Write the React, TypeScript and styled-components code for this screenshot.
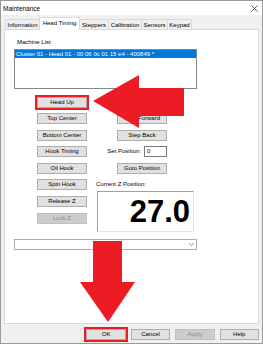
import styled, { createGlobalStyle } from 'styled-components';

const GlobalStyle = createGlobalStyle`
  html, body {
    margin: 0;
    padding: 0;
    background: #ffffff;
  }
  * {
    box-sizing: border-box;
  }
`;

const red = '#ec1c24';

const Window = styled.div`
  position: relative;
  width: 263px;
  height: 344px;
  border: 1px solid #9a9a9a;
  background: #f0f0f0;
  display: flex;
  flex-direction: column;
  font-family: "Liberation Sans", Arial, sans-serif;
  font-size: 6px;
  color: #000;
`;

const TitleBar = styled.div`
  height: 14px;
  background: #ffffff;
  display: flex;
  align-items: center;
  justify-content: space-between;
  padding: 0 4px 0 2px;
  font-size: 6.5px;
`;

const Body = styled.div`
  flex: 1;
  display: flex;
  flex-direction: column;
  padding: 2px 3px 0 3px;
`;

const TabStrip = styled.div`
  height: 12px;
  display: flex;
  align-items: flex-end;
  padding-left: 1px;
`;

const Tab = styled.div<{ $w: number; $active?: boolean }>`
  position: relative;
  width: ${p => p.$w}px;
  height: ${p => (p.$active ? 13 : 10)}px;
  margin-left: -1px;
  margin-bottom: ${p => (p.$active ? -1 : 0)}px;
  z-index: ${p => (p.$active ? 1 : 0)};
  background: ${p => (p.$active ? '#ffffff' : '#f0f0f0')};
  border: 1px solid #d9d9d9;
  border-bottom: none;
  display: flex;
  align-items: center;
  justify-content: center;
  padding-bottom: ${p => (p.$active ? 2 : 0)}px;
  white-space: nowrap;

  &:first-child {
    margin-left: 0;
  }
`;

const Panel = styled.div`
  height: 295px;
  background: #ffffff;
  border: 1px solid #d9d9d9;
  padding: 8px 0 0 9px;
  display: flex;
  flex-direction: column;
  align-items: flex-start;
`;

const Label = styled.div`
  line-height: 8px;
  white-space: nowrap;
`;

const ListLabel = styled(Label)`
  margin: 0 0 3px 3px;
`;

const ListBox = styled.div`
  width: 183px;
  height: 40px;
  background: #ffffff;
  border: 1px solid #828790;
`;

const ListItem = styled.div<{ $selected?: boolean }>`
  height: 8px;
  line-height: 8px;
  padding-left: 1px;
  white-space: nowrap;
  background: ${p => (p.$selected ? '#0078d7' : 'transparent')};
  color: ${p => (p.$selected ? '#ffffff' : '#000000')};
`;

const ButtonsArea = styled.div`
  display: flex;
  align-items: flex-start;
  margin-top: 7.5px;
`;

const ButtonColumn = styled.div`
  display: grid;
  grid-template-rows: repeat(8, 11px);
  row-gap: 5.6px;
  width: 50px;
  margin-left: 23px;
`;

const RightColumn = styled.div`
  width: 100px;
  margin-left: 9px;
  display: flex;
  flex-direction: column;
`;

const RightGrid = styled.div`
  display: grid;
  grid-template-rows: repeat(6, 11px);
  row-gap: 5.6px;
`;

const Button = styled.button<{ $highlight?: boolean; $w?: number }>`
  width: ${p => p.$w ?? 50}px;
  height: 11px;
  margin: 0;
  padding: 0;
  font-family: inherit;
  font-size: 6px;
  line-height: 9px;
  color: #000;
  background: #e1e1e1;
  border: 1px solid #adadad;
  border-radius: 0;
  outline: ${p => (p.$highlight ? `2px solid ${red}` : 'none')};
  white-space: nowrap;

  &:disabled {
    background: #cccccc;
    border-color: #bfbfbf;
    color: #8a8a8a;
  }
`;

const RightButton = styled(Button)`
  margin-left: 21px;
`;

const FieldRow = styled.div`
  display: flex;
  align-items: center;
  justify-content: flex-end;
  gap: 3px;
  padding-right: 29px;
`;

const Input = styled.div`
  width: 23px;
  height: 11px;
  border: 1px solid #7a7a7a;
  background: #fff;
  line-height: 9px;
  padding-left: 2px;
`;

const PositionLabel = styled(Label)`
  line-height: 11px;
`;

const Display = styled.div`
  margin: 1px 0 0 1px;
  width: 97px;
  height: 41px;
  background: #ffffff;
  border: 1px solid;
  border-color: #a0a0a0 #e3e3e3 #e3e3e3 #a0a0a0;
  display: flex;
  align-items: center;
  justify-content: flex-end;
  padding-right: 3px;
  font-size: 31px;
  font-weight: 700;
  line-height: 1;
`;

const Combo = styled.div`
  margin-top: 7px;
  width: 183px;
  height: 11px;
  background: #ffffff;
  border: 1px solid #adadad;
  display: flex;
  align-items: center;
  justify-content: flex-end;
  padding-right: 2px;
`;

const Footer = styled.div`
  display: flex;
  justify-content: flex-end;
  gap: 4.9px;
  margin-top: 4.5px;
`;

const Overlay = styled.svg`
  position: absolute;
  left: -1px;
  top: -1px;
  pointer-events: none;
`;

const tabs = [
  { label: 'Information', w: 35 },
  { label: 'Head Timing', w: 41, active: true },
  { label: 'Steppers', w: 30 },
  { label: 'Calibration', w: 34 },
  { label: 'Sensors', w: 27 },
  { label: 'Keypad', w: 25 },
];

const leftButtons = [
  { label: 'Head Up', highlight: true },
  { label: 'Top Center' },
  { label: 'Bottom Center' },
  { label: 'Hook Timing' },
  { label: 'Oil Hook' },
  { label: 'Spin Hook' },
  { label: 'Release Z' },
  { label: 'Lock Z', disabled: true },
];

const footerButtons = [
  { label: 'OK', highlight: true },
  { label: 'Cancel' },
  { label: 'Apply', disabled: true },
  { label: 'Help' },
];

export default function App() {
  return (
    <>
      <GlobalStyle />
      <Window>
        <TitleBar>
          <span>Maintenance</span>
          <svg width="7" height="7" viewBox="0 0 7 7">
            <path d="M0.5 0.5 L6.5 6.5 M6.5 0.5 L0.5 6.5" stroke="#333" strokeWidth="0.8" />
          </svg>
        </TitleBar>
        <Body>
          <TabStrip>
            {tabs.map(t => (
              <Tab key={t.label} $w={t.w} $active={t.active}>
                {t.label}
              </Tab>
            ))}
          </TabStrip>
          <Panel>
            <ListLabel>Machine List</ListLabel>
            <ListBox>
              <ListItem $selected>Cluster 01 - Head 01 - 00 06 0c 01 15 e4 - 400849 *</ListItem>
            </ListBox>
            <ButtonsArea>
              <ButtonColumn>
                {leftButtons.map(b => (
                  <Button key={b.label} $highlight={b.highlight} disabled={b.disabled}>
                    {b.label}
                  </Button>
                ))}
              </ButtonColumn>
              <RightColumn>
                <RightGrid>
                  <div />
                  <RightButton>Step Forward</RightButton>
                  <RightButton>Step Back</RightButton>
                  <FieldRow>
                    <PositionLabel>Set Position:</PositionLabel>
                    <Input>0</Input>
                  </FieldRow>
                  <RightButton>Goto Position</RightButton>
                  <PositionLabel>Current Z Position:</PositionLabel>
                </RightGrid>
                <Display>27.0</Display>
              </RightColumn>
            </ButtonsArea>
            <Combo>
              <svg width="5" height="3" viewBox="0 0 5 3">
                <polyline points="0.3,0.3 2.5,2.5 4.7,0.3" fill="none" stroke="#555" strokeWidth="0.7" />
              </svg>
            </Combo>
          </Panel>
          <Footer>
            {footerButtons.map(b => (
              <Button key={b.label} $w={39.5} $highlight={b.highlight} disabled={b.disabled}>
                {b.label}
              </Button>
            ))}
          </Footer>
        </Body>
        <Overlay width="263" height="345" viewBox="0 0 263 345">
          <polygon points="93,101 139,75 139,88 184,88 184,116 139,116 139,128" fill={red} />
          <polygon points="93,241 122,241 122,282 135,282 108,322 80,282 93,282" fill={red} />
        </Overlay>
      </Window>
    </>
  );
}
